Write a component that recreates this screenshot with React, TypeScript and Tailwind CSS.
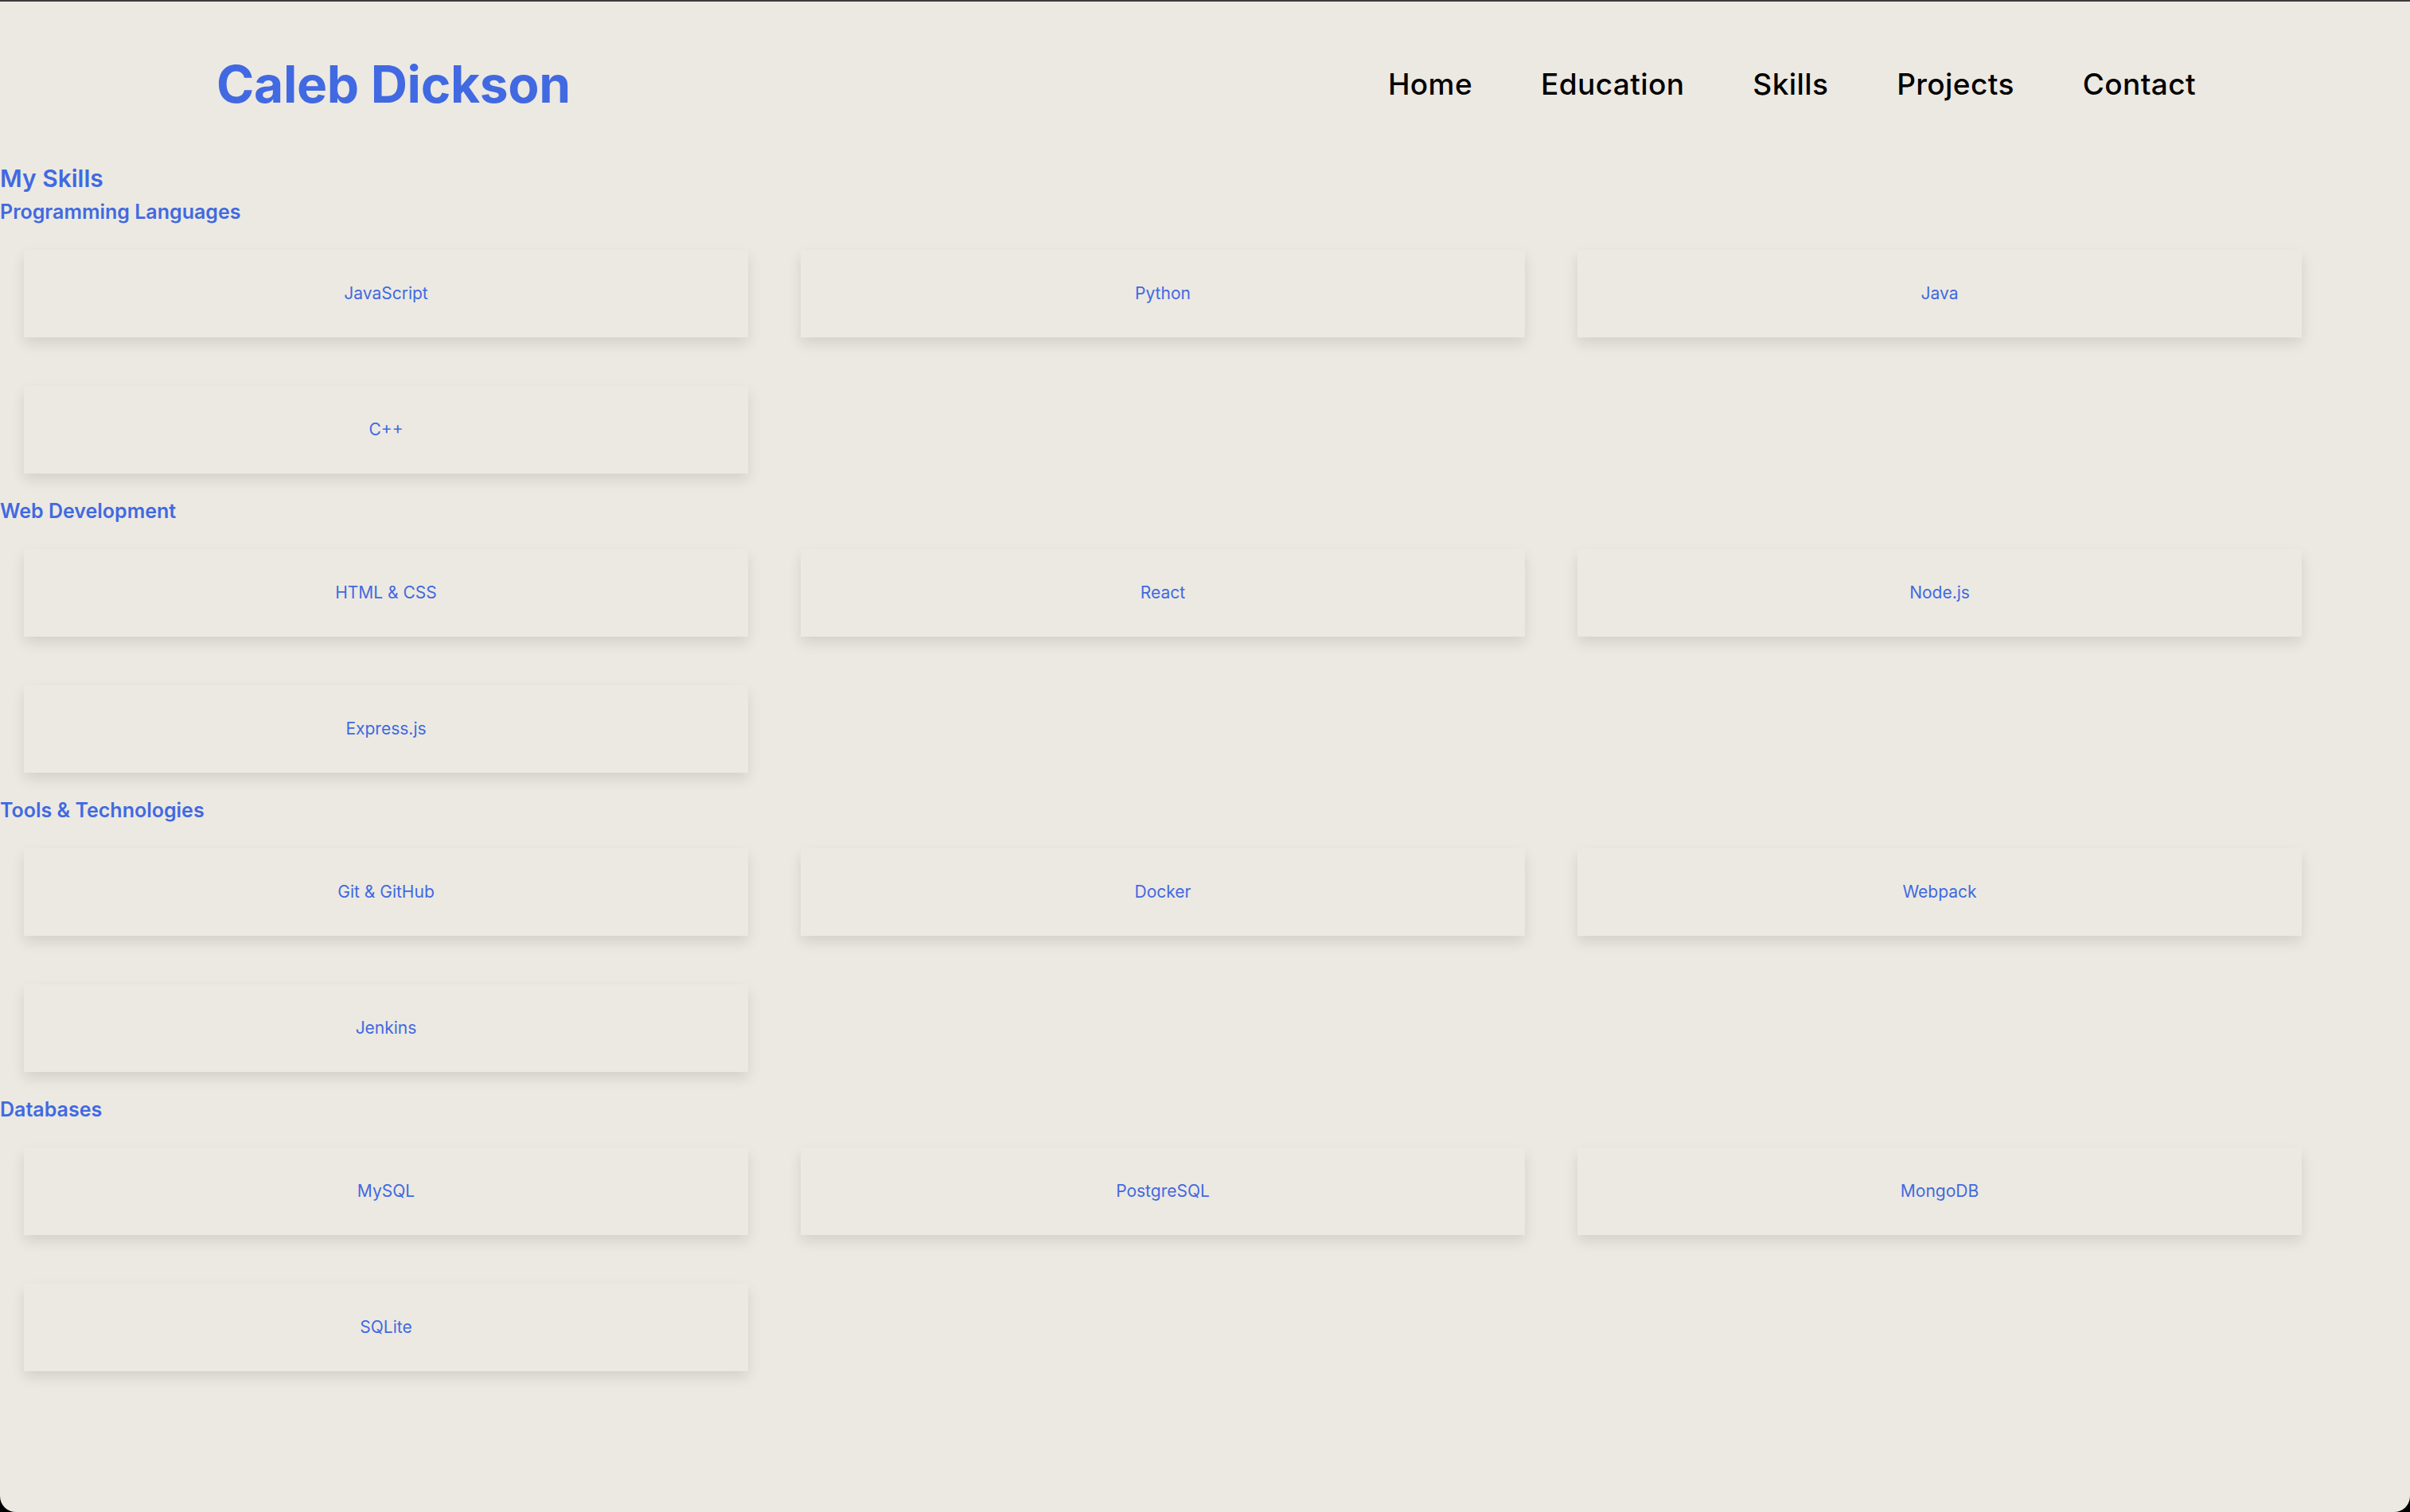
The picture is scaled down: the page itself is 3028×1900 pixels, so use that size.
import React from 'react'

const sections = [
  { title: 'Programming Languages', skills: ['JavaScript', 'Python', 'Java', 'C++'] },
  { title: 'Web Development', skills: ['HTML & CSS', 'React', 'Node.js', 'Express.js'] },
  { title: 'Tools & Technologies', skills: ['Git & GitHub', 'Docker', 'Webpack', 'Jenkins'] },
  { title: 'Databases', skills: ['MySQL', 'PostgreSQL', 'MongoDB', 'SQLite'] },
]

const navLinks = ['Home', 'Education', 'Skills', 'Projects', 'Contact']

const SkillCard: React.FC<{ name: string }> = ({ name }) => (
  <div className="h-[110px] bg-[#ece9e2] shadow-[0_8px_16px_rgba(0,0,0,0.1)] flex items-center justify-center">
    <span className="text-[21px] text-[#4169e1]">{name}</span>
  </div>
)

const App: React.FC = () => {
  return (
    <div className="bg-black min-h-screen">
      <div
        className="min-h-[1900px] bg-[#ece9e2] border-t-2 border-[#3c3c3c] rounded-b-[20px]"
        style={{ fontFamily: 'Inter, "Open Sans", sans-serif' }}
      >
        <header className="h-[198px] pt-[10px] pl-[272px] pr-[269px] flex items-center justify-between">
          <h1 className="text-[64px] font-bold text-[#4169e1] tracking-[-0.3px]">Caleb Dickson</h1>
          <nav className="flex items-center gap-[86px]">
            {navLinks.map((link) => (
              <a key={link} href="#" className="text-[37px] font-medium text-black tracking-[0.4px]">
                {link}
              </a>
            ))}
          </nav>
        </header>

        <section>
          <h2 className="text-[30px] leading-[48px] font-semibold text-[#4169e1]">My Skills</h2>
          {sections.map((section) => (
            <div key={section.title} className="pb-[29px]">
              <h3 className="text-[25px] leading-[36px] font-semibold text-[#4169e1]">{section.title}</h3>
              <div className="mt-[30px] pl-[30px] grid grid-cols-[repeat(3,910px)] gap-x-[66px] gap-y-[61px]">
                {section.skills.map((skill) => (
                  <SkillCard key={skill} name={skill} />
                ))}
              </div>
            </div>
          ))}
        </section>
      </div>
    </div>
  )
}

export default App
